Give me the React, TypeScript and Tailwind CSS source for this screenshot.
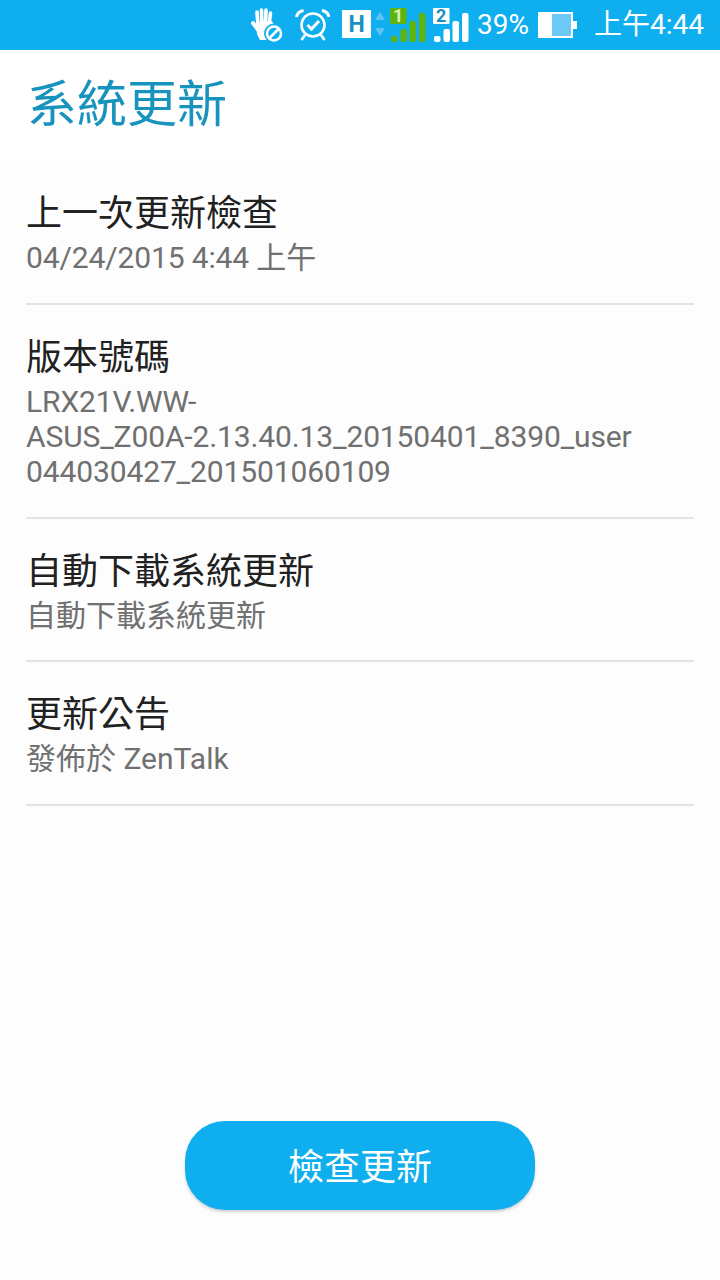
const font = { fontFamily: 'Roboto, "Noto Sans CJK TC", sans-serif' };

function Row({ title, lines, tight }: { title: string; lines: string[]; tight?: boolean }) {
  return (
    <div className="border-b-2 border-[#e3e3e3] pt-[29px] pb-[27.67px]">
      <div className="h-[48px] text-[36px] leading-[48px] text-[#212121]">{title}</div>
      <div className={`mt-[2px] text-[30px] leading-[35px] text-[#707070] ${tight ? "tracking-[-0.125px]" : ""}`}>
        {lines.map((l) => (
          <div key={l} className="whitespace-nowrap">{l}</div>
        ))}
      </div>
    </div>
  );
}

function Signal({ color, digit, digitColor, className }: { color: string; digit: string; digitColor: string; className: string }) {
  return (
    <div className={`relative h-[34px] w-[36px] ${className}`}>
      <svg width="36" height="34" viewBox="0 0 36 34" fill={color}>
        <rect x="0" y="0" width="16.5" height="16" rx="1" />
        <rect x="1" y="28" width="6.5" height="6" rx="2" />
        <rect x="10.5" y="21" width="6.5" height="13" rx="2" />
        <rect x="19.5" y="13" width="6.5" height="21" rx="2" />
        <rect x="29" y="5" width="6.5" height="29" rx="2" />
      </svg>
      <span className={`absolute top-[-1px] left-0 w-[16.5px] text-center text-[18px] leading-[18px] font-bold ${digitColor}`}>{digit}</span>
    </div>
  );
}

function StatusIcons() {
  return (
    <div className="flex items-center">
      <svg width="34" height="34" viewBox="0 0 34 34" fill="white">
        <path d="M3 15 L9 23" stroke="white" strokeWidth="4" strokeLinecap="round" />
        <path d="M7 4 L8 18 M11.5 2 L12 17 M16 2 L15.5 17 M20.5 5 L19 18" stroke="white" strokeWidth="3.6" strokeLinecap="round" />
        <path d="M6 14 L22 13 L24 17 L16 25 L17 32 L10 32 L7 26 Z" />
        <circle cx="24" cy="25.5" r="10" fill="#0faeee" />
        <circle cx="24" cy="25.5" r="7" fill="none" stroke="white" strokeWidth="2.6" />
        <path d="M19.5 30 L28.5 21" stroke="white" strokeWidth="2.6" />
      </svg>
      <svg className="ml-[11px]" width="35" height="32" viewBox="0 0 35 32" fill="none" stroke="white" strokeWidth="2.6">
        <circle cx="18" cy="16" r="11.5" />
        <path d="M12.5 16 L16.5 20 L24 12" strokeWidth="3" />
        <path d="M1.5 8 Q2.5 2.5 8.5 1.5 M34 8 Q33 2.5 27 1.5" strokeWidth="3" />
        <path d="M10 26 L6.5 31 M26 26 L29.5 31" strokeWidth="2.6" />
      </svg>
      <div className="mt-[-2px] ml-[12px] flex h-[28px] w-[29px] items-center justify-center bg-white text-[23px] leading-none font-bold text-[#1a8fc0]">H</div>
      <svg className="ml-[4px]" width="10" height="26" viewBox="0 0 10 26" fill="#5cc4f2">
        <path d="M5 0 L10 8 L0 8 Z M0 16 L10 16 L5 24 Z" />
      </svg>
      <Signal className="ml-[5px]" color="#5fb50f" digit="1" digitColor="text-[#d8f0b8]" />
      <Signal className="ml-[7px]" color="white" digit="2" digitColor="text-[#1a8fc0]" />
    </div>
  );
}

export default function App() {
  return (
    <div className="flex h-[1280px] w-[720px] flex-col bg-[#fdfdfd]" style={font}>
      <div className="flex h-[50px] items-center justify-end bg-[#0faeee] pr-[16px] text-white">
        <StatusIcons />
        <span className="ml-[8px] text-[28px] leading-none">39%</span>
        <div className="ml-[9px] flex items-center">
          <div className="flex h-[26px] w-[35px] bg-[#6cc8f5] outline-2 outline-white outline-offset-[-2px]">
            <div className="h-full w-[14px] bg-white" />
          </div>
          <div className="h-[8px] w-[4px] bg-white" />
        </div>
        <span className="ml-[17px] text-[28px] leading-none">上午4:44</span>
      </div>
      <div className="flex h-[111.33px] items-center bg-white pb-[1px] pl-[27px] text-[50px] leading-none text-[#1793bd]">系統更新</div>
      <div className="px-[26px]">
        <Row tight title="上一次更新檢查" lines={["04/24/2015 4:44 上午"]} />
        <Row tight title="版本號碼" lines={["LRX21V.WW-", "ASUS_Z00A-2.13.40.13_20150401_8390_user", "044030427_201501060109"]} />
        <Row title="自動下載系統更新" lines={["自動下載系統更新"]} />
        <Row title="更新公告" lines={["發佈於 ZenTalk"]} />
      </div>
      <div className="mt-[314.67px] flex justify-center">
        <button className="h-[89px] w-[350px] rounded-[40px] bg-[#0faeee] pt-[5px] text-[36px] leading-none text-white shadow-[0_2px_3px_rgba(0,0,0,0.18)]">檢查更新</button>
      </div>
    </div>
  );
}
